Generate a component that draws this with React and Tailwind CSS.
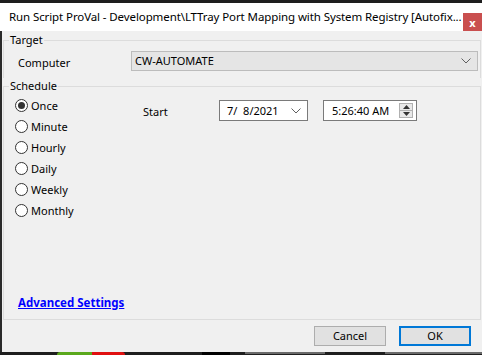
import React from "react";

function Radio({ label, checked }) {
  return (
    <div className="h-[21px] flex items-center">
      <div className="w-[13px] h-[13px] rounded-full border border-[#333333] bg-white flex items-center justify-center">
        {checked && <div className="w-[7px] h-[7px] rounded-full bg-[#333333]" />}
      </div>
      <span className="ml-[3px] text-black">{label}</span>
    </div>
  );
}

function Chevron({ className }) {
  return (
    <svg className={className} width="10" height="6" viewBox="0 0 10 6" fill="none">
      <path d="M0.5 0.5 L5 5 L9.5 0.5" stroke="#606060" strokeWidth="1" />
    </svg>
  );
}

export default function App() {
  return (
    <div className="w-[482px] h-[355px] bg-[#1e1e1e] flex flex-col overflow-hidden font-['Noto_Sans',sans-serif] text-[11px] leading-[16px] text-black">
      <div className="h-[3px] shrink-0" />
      <div className="h-[28px] shrink-0 bg-white flex">
        <div className="flex-1 min-w-0 pl-[9px] flex items-center whitespace-nowrap overflow-hidden text-[11.5px] tracking-[-0.1px]">
          Run Script ProVal - Development\LTTray Port Mapping with System Registry [Autofix...
        </div>
        <div className="self-end shrink-0 w-[19px] h-[18px] bg-[#c94f4f] text-white text-[11px] font-bold flex items-center justify-center leading-none">
          x
        </div>
      </div>
      <div className="h-[321px] shrink-0 bg-[#f0f0f0] border-l-2 border-[#2a2a2a] flex flex-col">
        <fieldset className="ml-[1px] mr-[1px] mt-[1px] h-[46px] border border-b-0 border-[#dcdcdc]">
          <legend className="ml-[5px] px-[1px] leading-[16px]">Target</legend>
          <div className="mt-[3px] flex items-center pl-[14px] pr-[2px]">
            <span className="w-[113px] shrink-0 pt-[3px]">Computer</span>
            <div className="flex-1 h-[20px] bg-[#e5e5e5] border border-[#bcbcbc] flex items-center pl-[3px] pr-[6px]">
              <span className="flex-1">CW-AUTOMATE</span>
              <Chevron />
            </div>
          </div>
        </fieldset>
        <fieldset className="ml-[1px] mr-[1px] h-[242px] border border-[#dcdcdc]">
          <legend className="ml-[5px] px-[1px] leading-[16px]">Schedule</legend>
          <div className="h-[225px] flex flex-col">
            <div className="mt-[1px] flex">
              <div className="w-[139px] pl-[11px] flex flex-col">
                <Radio label="Once" checked />
                <Radio label="Minute" />
                <Radio label="Hourly" />
                <Radio label="Daily" />
                <Radio label="Weekly" />
                <Radio label="Monthly" />
              </div>
              <div className="mt-[5px] flex items-start">
                <span className="w-[76px] pt-[4px]">Start</span>
                <div className="w-[89px] h-[21px] bg-white border border-[#7a7a7a] flex items-center pl-[7px] pr-[6px]">
                  <span className="flex-1">7/&nbsp;&nbsp;8/2021</span>
                  <Chevron />
                </div>
                <div className="ml-[15px] w-[94px] h-[21px] bg-white border border-[#7a7a7a] flex items-center pl-[8px] pr-[3px]">
                  <span className="flex-1">5:26:40 AM</span>
                  <div className="w-[14px] h-[15px] flex flex-col border border-[#b0b0b0] bg-[#e8e8e8]">
                    <div className="flex-1 flex items-center justify-center border-b border-[#b0b0b0]">
                      <svg width="7" height="4" viewBox="0 0 7 4"><path d="M0 4 L3.5 0 L7 4 Z" fill="#333" /></svg>
                    </div>
                    <div className="flex-1 flex items-center justify-center">
                      <svg width="7" height="4" viewBox="0 0 7 4"><path d="M0 0 L3.5 4 L7 0 Z" fill="#333" /></svg>
                    </div>
                  </div>
                </div>
              </div>
            </div>
            <div className="mt-auto pl-[14px] pb-[8px]">
              <a href="#" className="font-bold underline text-[#0000ff] text-[11.5px]">Advanced Settings</a>
            </div>
          </div>
        </fieldset>
        <div className="h-[32px] flex justify-end items-start pt-[6px] pr-[11px] gap-[13px]">
          <div className="w-[72px] h-[20px] bg-[#e1e1e1] border border-[#adadad] flex items-center justify-center">Cancel</div>
          <div className="w-[72px] h-[20px] bg-[#e1e1e1] border-2 border-[#0078d7] flex items-center justify-center">OK</div>
        </div>
      </div>
      <div className="h-[3px] shrink-0 relative overflow-hidden">
        <div className="absolute left-[57px] top-0 w-[35px] h-[3px] bg-[#5aa81c] rounded-tl-[6px]" />
        <div className="absolute left-[92px] top-0 w-[33px] h-[3px] bg-[#e01010] rounded-tr-[6px]" />
        <div className="absolute left-[202px] top-0 w-[28px] h-[3px] bg-black" />
        <div className="absolute left-[245px] top-0 w-[80px] h-[2px] bg-[#6a6a6a]" />
        <div className="absolute left-[385px] top-0 w-[97px] h-[2px] bg-[#6a6a6a]" />
      </div>
    </div>
  );
}
